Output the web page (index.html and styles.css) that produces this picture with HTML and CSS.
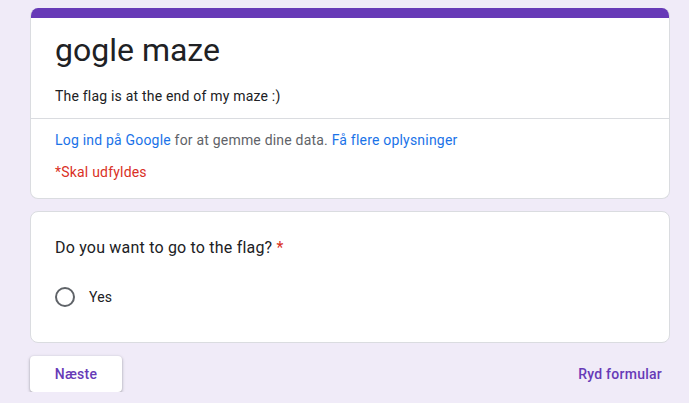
FILE: index.html
```html
<!DOCTYPE html>
<html lang="da">
<head>
<meta charset="utf-8">
<title>gogle maze</title>
<link rel="stylesheet" href="styles.css">
</head>
<body>
<div class="page">
  <div class="card header-card">
    <div class="accent"></div>
    <div class="header-main">
      <h1 class="title">gogle maze</h1>
      <div class="desc">The flag is at the end of my maze :)</div>
    </div>
    <div class="header-info">
      <div class="login"><a class="link" href="#">Log ind på Google</a> for at gemme dine data. <a class="link" href="#">Få flere oplysninger</a></div>
      <div class="required-note">*Skal udfyldes</div>
    </div>
  </div>
  <div class="card question-card">
    <div class="question">Do you want to go to the flag? <span class="star">*</span></div>
    <label class="option">
      <span class="radio"></span>
      <span class="option-label">Yes</span>
    </label>
  </div>
  <div class="actions">
    <button class="next-btn">Næste</button>
    <button class="clear-btn">Ryd formular</button>
  </div>
</div>
</body>
</html>
```
FILE: styles.css
```css
html, body {
  margin: 0;
  padding: 0;
  background: #f0ebf8;
}
body {
  font-family: Roboto, "Liberation Sans", Arial, sans-serif;
  color: #202124;
}
.page {
  width: 640px;
  padding: 8px 0 0 30px;
  display: flex;
  flex-direction: column;
  gap: 12px;
}
.card {
  background: #fff;
  border: 1px solid #dadce0;
  border-radius: 8px;
  box-sizing: border-box;
  width: 640px;
}
.header-card {
  border-top: none;
  overflow: hidden;
}
.accent {
  height: 10px;
  background: #673ab7;
  margin: 0 -1px;
}
.header-main {
  padding: 12px 24px 12px;
  border-bottom: 1px solid #dadce0;
}
.title {
  margin: 0;
  font-weight: 400;
  font-size: 32px;
  line-height: 40px;
  color: #202124;
}
.desc {
  margin-top: 16px;
  font-size: 14px;
  line-height: 20px;
  letter-spacing: 0.2px;
}
.header-info {
  padding: 11px 24px 16px;
  font-size: 14px;
  line-height: 20px;
  letter-spacing: 0.2px;
}
.login {
  color: #5f6368;
}
.link {
  color: #1a73e8;
  text-decoration: none;
}
.required-note {
  margin-top: 12px;
  color: #d93025;
}
.question-card {
  padding: 24px 24px 35px;
}
.question {
  font-size: 16px;
  line-height: 24px;
  letter-spacing: 0.2px;
  color: #202124;
}
.star {
  color: #d93025;
}
.option {
  display: flex;
  align-items: center;
  gap: 14px;
  margin-top: 27px;
}
.radio {
  width: 20px;
  height: 20px;
  box-sizing: border-box;
  border: 2px solid #5f6368;
  border-radius: 50%;
}
.option-label {
  font-size: 14px;
  line-height: 20px;
  letter-spacing: 0.2px;
  color: #202124;
}
.actions {
  display: flex;
  justify-content: space-between;
  align-items: center;
  width: 640px;
  margin-top: 1px;
}
.next-btn {
  width: 92px;
  height: 36px;
  border: none;
  background: #fff;
  border-radius: 4px;
  box-shadow: 0 1px 2px rgba(60,64,67,0.3), 0 1px 3px 1px rgba(60,64,67,0.15);
  color: #673ab7;
  font-family: Roboto, "Liberation Sans", Arial, sans-serif;
  font-weight: 500;
  font-size: 14px;
  letter-spacing: 0.25px;
}
.clear-btn {
  border: none;
  background: transparent;
  color: #673ab7;
  font-family: Roboto, "Liberation Sans", Arial, sans-serif;
  font-weight: 500;
  font-size: 14px;
  letter-spacing: 0.25px;
  padding: 0 8px;
  height: 36px;
}
```
